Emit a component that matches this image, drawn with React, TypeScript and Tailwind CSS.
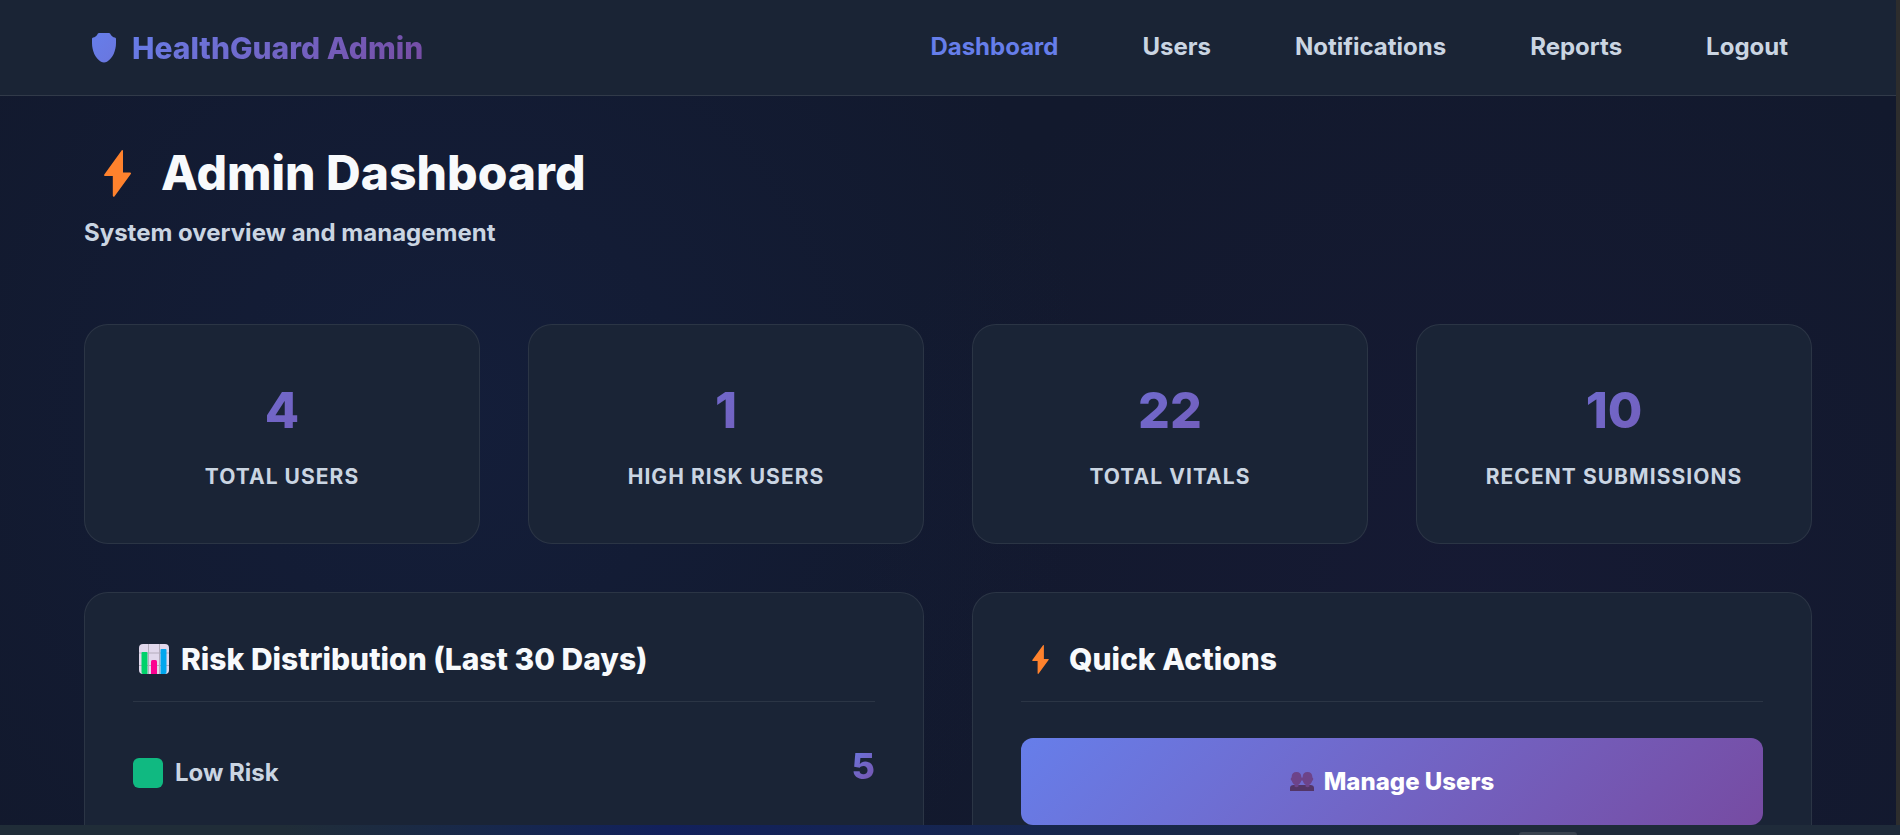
import React from 'react';

const navItems = ['Dashboard', 'Users', 'Notifications', 'Reports', 'Logout'];

const stats = [
  { label: 'Total Users', value: 4 },
  { label: 'High Risk Users', value: 1 },
  { label: 'Total Vitals', value: 22 },
  { label: 'Recent Submissions', value: 10 },
];

const ShieldIcon: React.FC = () => (
  <svg viewBox="0 0 24 30" className="w-6 h-[30px]" aria-hidden="true">
    <defs>
      <linearGradient id="shield" x1="0" y1="0" x2="1" y2="1">
        <stop offset="0" stopColor="#667eea" />
        <stop offset="1" stopColor="#6a76de" />
      </linearGradient>
    </defs>
    <path
      d="M7 0H17C18 0 18.2 .8 18.8 1.7C19.7 3.2 21 4.2 22.8 4.4C23.6 4.5 24 5 24 6V10C24 18 20.5 25.500 15 28.700C13 29.800 11 29.800 9 28.700C3.500 25.500 0 18 0 10V6C0 5 .4 4.500 1.200 4.400C3 4.200 4.300 3.200 5.200 1.700C5.800 .8 6 0 7 0Z"
      fill="url(#shield)"
    />
  </svg>
);

const BoltIcon: React.FC<{ className: string }> = ({ className }) => (
  <svg viewBox="0 0 27 47" className={className} aria-hidden="true">
    <path
      d="M17.600 .4C18.200 -.4 19 .1 19 1V22.500H26C27 22.500 27.300 23.200 26.800 24L10.600 46.200C9.900 47.200 8.800 46.900 8.800 45.800V26H1C0 26 -.2 25.300 .3 24.500Z"
      fill="#ff822d"
    />
  </svg>
);

const ChartIcon: React.FC = () => (
  <svg viewBox="0 0 30 30" className="w-[30px] h-[30px]" aria-hidden="true">
    <rect width="30" height="30" rx="4" fill="#e1d8ec" />
    <path d="M9.500 0V30M20.500 0V30M0 9H30M0 21.500H30" stroke="#b4acbc" strokeWidth="1" />
    <path d="M2.500 9Q2.500 8 3.500 8H7.500Q8.500 8 8.500 9V30H4Q2.500 30 2.500 28Z" fill="#00d26a" />
    <path d="M12 17.500Q12 16 13.500 16H16.500Q18 16 18 17.500V30H12Z" fill="#fc0090" />
    <path d="M21.500 6Q21.500 5 22.500 5H26.500Q27.500 5 27.500 6V28Q27.500 30 26 30H21.500Z" fill="#00a6ed" />
  </svg>
);

const UsersIcon: React.FC = () => (
  <svg viewBox="0 0 24 19" className="w-6 h-[19px]" aria-hidden="true">
    <path d="M0 19V16C0 14 1.500 13 3.500 13H20.500C22.500 13 24 14 24 16V19Z" fill="#533566" />
    <path
      d="M6.500 0C9.500 0 11.300 2 11.300 4.500V5.500C12 5.500 12 5.500 12.700 5.500V4.500C12.700 2 14.500 0 17.500 0S22.300 2 22.300 4.500V5.500C23.600 5.700 23.600 8.500 22.200 8.700C21.800 10.500 20.800 11.800 19.500 12.500V14.500C18.500 15.500 16.500 15.500 15.500 14.500V12.500C14.200 11.800 13.200 10.500 12.800 8.700C12.300 8.500 11.700 8.500 11.200 8.700C10.800 10.500 9.800 11.800 8.500 12.500V14.500C7.500 15.500 5.500 15.500 4.500 14.500V12.500C3.200 11.800 2.200 10.500 1.800 8.700C.4 8.500 .4 5.700 1.700 5.500V4.500C1.700 2 3.500 0 6.500 0Z"
      fill="#6d4389"
    />
  </svg>
);

const cardStyle = 'rounded-3xl border border-white/8 bg-[#1a2436]';
const gradientText = 'bg-linear-135 from-[#667eea] to-[#764ba2] bg-clip-text text-transparent';

const Header: React.FC = () => (
  <header className="shrink-0 border-b border-white/10 bg-[#1a2435]">
    <div className="mx-auto flex h-[95px] w-full max-w-[1728px] items-center justify-between">
      <a href="#" className="flex items-center gap-4 pl-2">
        <ShieldIcon />
        <span className={`text-[30px] leading-10 font-extrabold ${gradientText}`}>HealthGuard Admin</span>
      </a>
      <nav className="flex items-center gap-9 pb-0.5">
        {navItems.map((item, i) => (
          <a
            key={item}
            href="#"
            className={`px-6 text-2xl font-bold ${i === 0 ? 'text-[#667eea]' : 'text-slate-300'}`}
          >
            {item}
          </a>
        ))}
      </nav>
    </div>
  </header>
);

const PanelTitle: React.FC<{ icon: React.ReactNode; children: React.ReactNode }> = ({ icon, children }) => (
  <h2 className="flex items-center gap-3 border-b border-white/8 pb-6 text-[30px] leading-9 font-extrabold text-slate-50">
    <span className="flex w-9 justify-end">{icon}</span>
    {children}
  </h2>
);

const App: React.FC = () => {
  return (
    <div className="flex h-screen flex-col overflow-hidden bg-[#0f172a] font-['Inter',sans-serif]">
      <div className="flex min-h-0 flex-1">
        <div className="flex min-w-0 flex-1 flex-col overflow-hidden bg-[#12192d] bg-[radial-gradient(circle_at_24%_50%,rgba(24,42,90,0.28),transparent_42%),radial-gradient(circle_at_78%_72%,rgba(44,30,90,0.14),transparent_40%)]">
          <Header />
          <main className="mx-auto w-full max-w-[1728px] pt-10">
            <h1 className="flex items-center gap-[30px] pl-5 text-5xl leading-[74px] font-extrabold text-slate-50">
              <BoltIcon className="w-[27px] h-[47px]" />
              Admin Dashboard
            </h1>
            <p className="mt-1 text-2xl leading-[38px] font-bold text-slate-300">System overview and management</p>

            <section className="mt-18 grid grid-cols-4 gap-12">
              {stats.map((stat) => (
                <div key={stat.label} className={`px-6 py-12 text-center ${cardStyle}`}>
                  <div className={`text-[50px] leading-[74px] font-extrabold ${gradientText}`}>{stat.value}</div>
                  <div className="mt-3 text-[21px] leading-9 font-bold tracking-wider text-slate-300 uppercase">{stat.label}</div>
                </div>
              ))}
            </section>

            <section className="mt-12 grid grid-cols-2 gap-12">
              <div className={`p-12 ${cardStyle}`}>
                <PanelTitle icon={<ChartIcon />}>Risk Distribution (Last 30 Days)</PanelTitle>
                <div className="mt-9 flex items-center justify-between">
                  <div className="flex items-center gap-3 pt-3.5">
                    <span className="size-[30px] rounded-md bg-[#10b981]" />
                    <span className="text-2xl font-bold text-slate-300">Low Risk</span>
                  </div>
                  <span className={`text-4xl leading-[56px] font-extrabold ${gradientText}`}>5</span>
                </div>
              </div>
              <div className={`p-12 ${cardStyle}`}>
                <PanelTitle icon={<BoltIcon className="mr-2 h-[29px] w-[17px]" />}>Quick Actions</PanelTitle>
                <button
                  type="button"
                  className="mt-9 flex h-[87px] w-full items-center justify-center gap-2.5 rounded-xl bg-linear-135 from-[#667eea] to-[#764ba2] text-2xl font-extrabold text-white"
                >
                  <UsersIcon />
                  Manage Users
                </button>
              </div>
            </section>
          </main>
        </div>
        <div className="w-1 bg-[#2d2d2d]" />
      </div>
      <footer className="flex h-[10px] shrink-0 items-end justify-end bg-linear-to-r from-[#202d38] from-15% via-[#12205c] via-35% to-[#1f2b3a] to-80%">
        <div className="mr-[17%] h-[3px] w-[58px] rounded-t-md bg-[#39434f]" />
      </footer>
    </div>
  );
};

export default App;
